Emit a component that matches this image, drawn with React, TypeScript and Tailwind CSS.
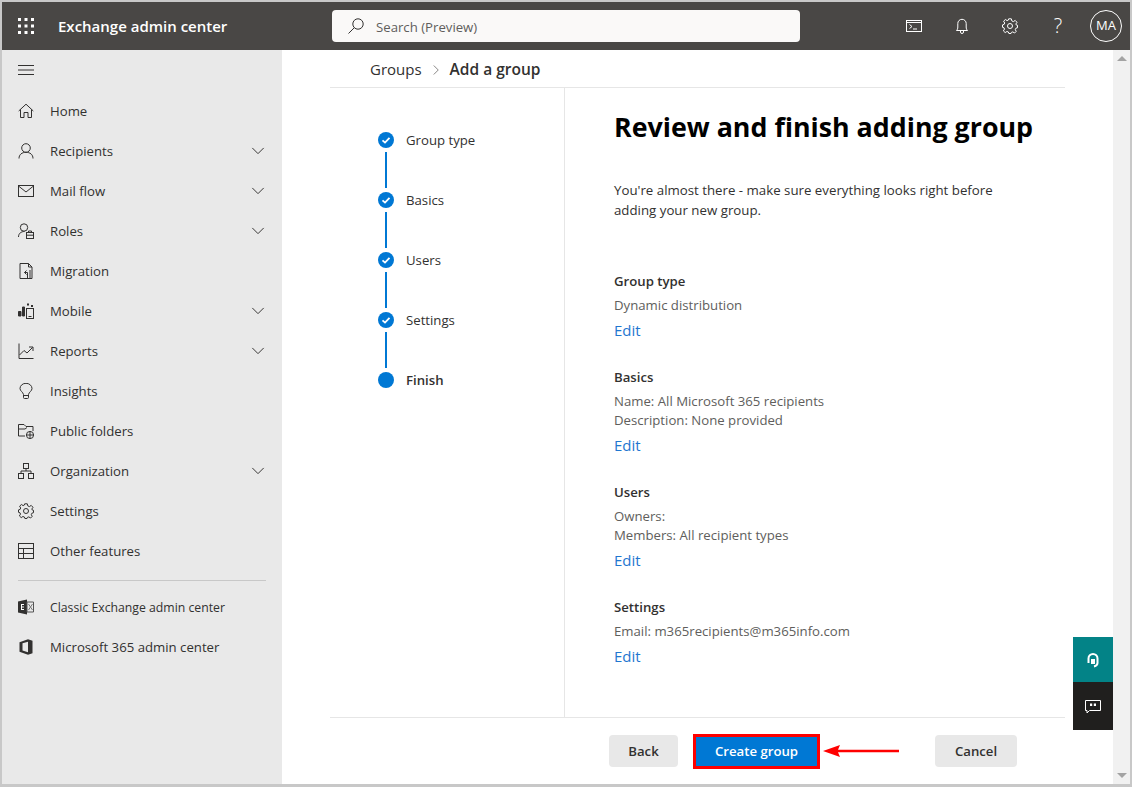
import type { ReactNode } from "react";

const font = "font-['Open_Sans','Noto_Sans',sans-serif]";

function Svg({ children, className = "" }: { children: ReactNode; className?: string }) {
  return (
    <svg viewBox="0 0 16 16" fill="none" stroke="currentColor" strokeWidth="1" className={"h-4 w-4 shrink-0 " + className}>
      {children}
    </svg>
  );
}

const gearPath =
  "M6.7.8H9.3L9.8 2.9 11.4 3.6 13.2 2.4 15 4.3 13.8 6 14.4 7.1 15.5 7.3V9.7L13.9 10.2 13.3 11.6 14.2 13.4 12.6 15 10.8 13.9 9.4 14.4 9 15.5H6.9L6.4 14 4.9 13.5 3.2 14.6 1.4 12.9 2.5 11.1 2 9.8.5 9.3V6.9L2.1 6.4 2.7 5 1.6 3.2 3.4 1.5 5.1 2.6 6.3 2.1Z";

const navIcons: Record<string, ReactNode> = {
  Home: <path d="M.7 8 8 1.2 15.3 8M2.5 6.5V14.5H6V9.5H10V14.5H13.5V6.5" />,
  Recipients: (
    <>
      <circle cx="8" cy="5" r="4.3" />
      <path d="M1 15.5C1 11.5 4 9.3 8 9.3S15 11.5 15 15.5" />
    </>
  ),
  "Mail flow": (
    <>
      <rect x=".5" y="2.5" width="15" height="11" />
      <path d="M.5 3 8 9l7.5-6" />
    </>
  ),
  Roles: (
    <>
      <circle cx="6" cy="4.5" r="3.7" />
      <path d="M.5 14C.5 10.5 3 8.5 6.5 8.5" />
      <rect x="8.5" y="9.5" width="7" height="6" />
      <path d="M8.5 12.2H15.5M10.5 9.5V8H13.5V9.5" />
    </>
  ),
  Migration: <path d="M10.5.5H2V15.500H14V4ZM10.500.5V4H14M9.500 15.500V9.500H6.500M8.500 7.500 6.500 9.500 8.500 11.500M12 15.500V7" />,
  Mobile: (
    <>
      <path d="M.5 8.500H3V13H.5ZM4.500 4H6.500V13H4.500Z" fill="currentColor" />
      <rect x="8.500" y="5.500" width="7" height="10" />
      <path d="M10.500 13.500H13.500" />
      <path d="M9 1.500H11M13 3H15" strokeWidth="2" />
    </>
  ),
  Reports: <path d="M1 .5V15.500H15.500M1.500 12 6 7.500 9 10 14.500 4.500M11 4H15V8" />,
  Insights: <path d="M5.500 11.500C5 9 2 8 2 5.500A6 5.200 0 0 1 14 5.500C14 8 11 9 10.500 11.500V14.500A1 1 0 0 1 9.500 15.500H6.500A1 1 0 0 1 5.500 14.500ZM5.500 12.500H10.500" />,
  "Public folders": (
    <>
      <path d="M7 13H.5V1.500H6L8 3.500H15V8M.5 6H7L9 4.500" />
      <circle cx="12" cy="12" r="3.600" />
      <path d="M8.500 12H15.500M12 8.500V15.500" />
    </>
  ),
  Organization: (
    <>
      <rect x="5.500" y=".5" width="5" height="5" />
      <rect x=".5" y="10.500" width="5" height="5" />
      <rect x="10.500" y="10.500" width="5" height="5" />
      <path d="M8 5.500V8M3 10.500V8H13V10.500" />
    </>
  ),
  Settings: (
    <>
      <circle cx="8" cy="8" r="2.500" />
      <path d={gearPath} />
    </>
  ),
  "Other features": (
    <>
      <rect x=".5" y=".5" width="15" height="15" />
      <path d="M.5 5.500H15.500M.5 10.500H15.500M5.500 5.500V15.500" />
    </>
  ),
};

const navItems = [
  { label: "Home" },
  { label: "Recipients", chevron: true },
  { label: "Mail flow", chevron: true },
  { label: "Roles", chevron: true },
  { label: "Migration" },
  { label: "Mobile", chevron: true },
  { label: "Reports", chevron: true },
  { label: "Insights" },
  { label: "Public folders" },
  { label: "Organization", chevron: true },
  { label: "Settings" },
  { label: "Other features" },
];

const steps = ["Group type", "Basics", "Users", "Settings"];

const sections = [
  { title: "Group type", lines: ["Dynamic distribution"], mt: "mt-0" },
  { title: "Basics", lines: ["Name: All Microsoft 365 recipients", "Description: None provided"], mt: "mt-[25px]" },
  { title: "Users", lines: ["Owners:", "Members: All recipient types"], mt: "mt-[25px]" },
  { title: "Settings", lines: ["Email: m365recipients@m365info.com"], mt: "mt-[25px]" },
];

function Chevron() {
  return (
    <svg viewBox="0 0 16 16" fill="none" stroke="#323130" strokeWidth="1.1" className="ml-auto h-[14px] w-[16px]">
      <path d="M1.500 4.500 8 11 14.500 4.500" />
    </svg>
  );
}

function NavRow({ label, icon, chevron, small }: { label: string; icon: ReactNode; chevron?: boolean; small?: boolean }) {
  return (
    <div className={"flex h-10 items-center pl-4 pr-4 text-[#323130] " + (small ? "text-[12.25px]" : "text-[13.2px]")}>
      <span className="flex w-8 shrink-0 text-[#323130]">{icon}</span>
      <span className="pt-[2px]">{label}</span>
      {chevron ? <Chevron /> : null}
    </div>
  );
}

function Check() {
  return (
    <span className="flex h-4 w-4 items-center justify-center rounded-full bg-[#0078d4]">
      <svg viewBox="0 0 16 16" fill="none" stroke="#fff" strokeWidth="1.800" className="h-4 w-4">
        <path d="M4.500 8.300 7 10.600 11.500 5.800" />
      </svg>
    </span>
  );
}

export default function App() {
  return (
    <div className={"relative flex h-[787px] w-[1132px] flex-col overflow-hidden border-t-2 border-r-2 border-b-[3px] border-l-2 border-[#c8c8c8] bg-white " + font}>
      <header className="flex h-12 shrink-0 items-center bg-[#494745] text-white">
        <svg viewBox="0 0 16 16" fill="#fff" className="ml-4 h-4 w-4 shrink-0">
          <path d="M0 0h3v3H0zM6.500 0h3v3h-3zM13 0h3v3h-3zM0 6.500h3v3H0zM6.500 6.500h3v3h-3zM13 6.500h3v3h-3zM0 13h3v3H0zM6.500 13h3v3h-3zM13 13h3v3h-3z" />
        </svg>
        <span className="ml-6 w-[274px] text-[15px] font-semibold">Exchange admin center</span>
        <div className="flex h-8 w-[468px] items-center rounded bg-[#faf9f8] pl-4 text-[13.2px] text-[#605e5c]">
          <svg viewBox="0 0 16 16" fill="none" stroke="#323130" strokeWidth="1" className="h-4 w-4">
            <circle cx="10" cy="6" r="5.200" />
            <path d="M6.300 9.700.5 15.500" />
          </svg>
          <span className="ml-3 pt-[3px]">Search (Preview)</span>
        </div>
        <div className="ml-auto flex items-center">
          <Svg className="text-white">
            <rect x=".5" y="2.500" width="15" height="11" />
            <path d="M.5 4.500H15.500M3.500 6.500 6 8.500 3.500 10.500M7 11H11" />
          </Svg>
          <Svg className="ml-8 text-white">
            <path d="M2.500 12.500C3.500 11.500 3.800 10.500 3.800 9V5.500A4.200 4.200 0 0 1 12.200 5.500V9C12.200 10.500 12.500 11.500 13.500 12.500ZM6.500 12.500V14A1.500 1.500 0 0 0 9.500 14V12.500" />
          </Svg>
          <Svg className="ml-8 text-white">
            <circle cx="8" cy="8" r="2.500" />
            <path d={gearPath} />
          </Svg>
          <span className="ml-8 w-4 text-center text-[20px] font-light leading-none">?</span>
          <span className="mr-2 ml-6 flex h-8 w-8 items-center justify-center rounded-full border border-white text-[13px]">MA</span>
        </div>
      </header>

      <div className="flex min-h-0 flex-1">
        <aside className="w-[280px] shrink-0 bg-[#e9e9e9]">
          <div className="flex h-10 items-center pl-4">
            <svg viewBox="0 0 16 16" fill="none" stroke="#323130" strokeWidth="1" className="h-4 w-4">
              <path d="M0 3.500H16M0 8H16M0 12.500H16" />
            </svg>
          </div>
          <div className="mt-px">
            {navItems.map((item) => (
              <NavRow key={item.label} label={item.label} icon={<Svg>{navIcons[item.label]}</Svg>} chevron={item.chevron} />
            ))}
          </div>
          <div className="mx-4 mt-[9px] border-t border-[#c8c8c8]" />
          <div className="mt-[6px]">
            <NavRow
              small
              label="Classic Exchange admin center"
              icon={
                <svg viewBox="0 0 16 16" className="h-4 w-4">
                  <path d="M0 2.500 9 .5V15.500L0 13.500Z" fill="#323130" />
                  <path d="M9 3H15.500V13H9Z" fill="none" stroke="#555" />
                  <path d="M3 5H6V6H4V7.500H6V8.500H4V10H6V11H3Z" fill="#fff" />
                  <path d="M10.500 5 14.500 11M14.500 5 10.500 11" stroke="#777" />
                </svg>
              }
            />
            <NavRow
              label="Microsoft 365 admin center"
              icon={
                <svg viewBox="0 0 16 16" className="h-4 w-4">
                  <path d="M1.500 3.200 10 .2 14.500 1.700V14.300L10 15.800 1.500 12.800ZM10 2.800 4.500 4.200V11.500L10 13.200Z" fill="#323130" />
                </svg>
              }
            />
          </div>
        </aside>

        <main className="flex min-w-0 flex-1 flex-col pl-12 pr-[48px]">
          <nav className="flex h-[38px] shrink-0 items-center border-b border-[#e6e6e6] pl-10 pt-[2px] text-[15px] text-[#323130]">
            <span>Groups</span>
            <svg viewBox="0 0 16 16" fill="none" stroke="#605e5c" strokeWidth="1" className="mx-2 h-3 w-3">
              <path d="M5 2 11 8 5 14" />
            </svg>
            <span className="text-[15.5px] font-semibold">Add a group</span>
          </nav>
          <div className="flex min-h-0 flex-1">
            <div className="w-[235px] shrink-0 border-r border-[#e6e6e6] pl-12 pt-[44px]">
              {steps.map((step) => (
                <div key={step}>
                  <div className="flex h-4 items-center text-[13.2px] text-[#323130]">
                    <Check />
                    <span className="ml-3 pt-[2px]">{step}</span>
                  </div>
                  <div className="my-1 ml-[7px] h-9 w-0.5 bg-[#0078d4]" />
                </div>
              ))}
              <div className="flex h-4 items-center text-[13.2px] font-semibold text-[#323130]">
                <span className="h-4 w-4 rounded-full bg-[#0078d4]" />
                <span className="ml-3 pt-[2px]">Finish</span>
              </div>
            </div>
            <div className="flex-1 pl-[49px] pt-[19px] text-[13.2px] leading-5 text-[#323130]">
              <h1 className="text-[26.8px] font-bold leading-10 text-black">Review and finish adding group</h1>
              <p className="mt-[33px] w-[400px] text-[13.27px]">You're almost there - make sure everything looks right before adding your new group.</p>
              <div className="mt-[51px]">
                {sections.map((section) => (
                  <section key={section.title} className={section.mt}>
                    <h2 className="font-semibold">{section.title}</h2>
                    <div className="mt-[5px] leading-[19px] text-[#605e5c]">
                      {section.lines.map((line) => (
                        <p key={line}>{line}</p>
                      ))}
                    </div>
                    <a className="mt-[3px] block text-[15px] leading-[24px] text-[#1f77d0]">Edit</a>
                  </section>
                ))}
              </div>
            </div>
          </div>
          <footer className="flex h-[67px] shrink-0 items-center border-t border-[#e6e6e6] pl-[279px] text-[13.2px] font-semibold">
            <button className="h-8 w-[69px] rounded-sm bg-[#e8e8e8] pt-[2px] text-[#323130]">Back</button>
            <button className="ml-[15px] h-[35px] w-[127px] border-[3px] border-[#ff0000] bg-[#0078d4] pt-[2px] text-white">Create group</button>
            <svg viewBox="0 0 76 16" className="ml-[3px] h-4 w-[76px]">
              <path d="M0 8 17 2 15 6.700H76V9.300H15L17 14Z" fill="#ff0000" />
            </svg>
            <button className="ml-[36px] h-8 w-[82px] rounded-sm bg-[#e8e8e8] pt-[2px] text-[#323130]">Cancel</button>
          </footer>
        </main>

        <div className="flex w-[17px] shrink-0 flex-col items-center justify-between bg-[#f1f1f1] py-[6px]">
          <span className="h-0 w-0 border-x-[5px] border-b-[5px] border-x-transparent border-b-[#a3a3a3]" />
          <span className="h-0 w-0 border-x-[5px] border-t-[5px] border-x-transparent border-t-[#a3a3a3]" />
        </div>
      </div>

      <div className="absolute right-[17px] top-[635px] w-10">
        <div className="flex h-[45px] items-center justify-center bg-[#038387]">
          <svg viewBox="0 0 16 16" fill="none" stroke="#fff" strokeWidth="2" className="h-4 w-4">
            <path d="M3.500 11V6.500A4.500 4.500 0 0 1 12.500 6.500V11C12.500 13 11 14 9 14.500" />
            <path d="M6 7h4v5H6z" fill="#fff" stroke="none" />
          </svg>
        </div>
        <div className="flex h-12 items-center justify-center bg-[#201f1e]">
          <svg viewBox="0 0 16 16" fill="none" stroke="#fff" strokeWidth="1" className="h-4 w-4">
            <path d="M.5 2.500H15.500V12.500H4.500L2 15V12.500H.5Z" />
            <path d="M5 5.500h2.200v2.500H5zM8.800 5.500h2.200v2.500H8.800z" fill="#fff" stroke="none" />
          </svg>
        </div>
      </div>
    </div>
  );
}
